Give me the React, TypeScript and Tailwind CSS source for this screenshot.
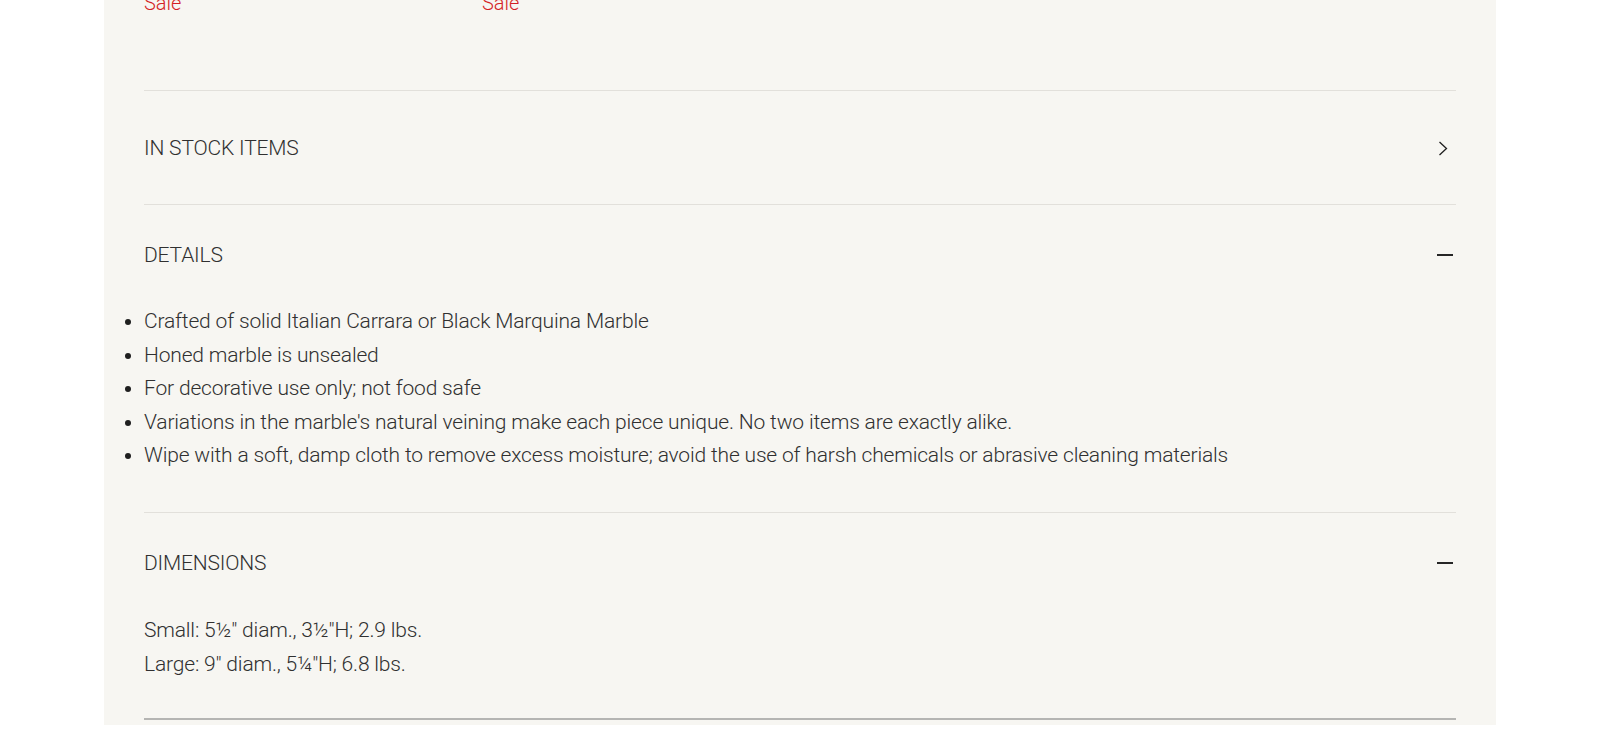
import React from 'react';

const details = [
  'Crafted of solid Italian Carrara or Black Marquina Marble',
  'Honed marble is unsealed',
  'For decorative use only; not food safe',
  "Variations in the marble's natural veining make each piece unique. No two items are exactly alike.",
  'Wipe with a soft, damp cloth to remove excess moisture; avoid the use of harsh chemicals or abrasive cleaning materials',
];

const dimensions = ['Small: 5½" diam., 3½"H; 2.9 lbs.', 'Large: 9" diam., 5¼"H; 6.8 lbs.'];

function Chevron() {
  return (
    <svg width="10" height="15" viewBox="0 0 10 15" fill="none" className="mr-[8px]">
      <polyline points="1.5,1 8.5,7.5 1.5,14" stroke="#1f1f1f" strokeWidth="1.3" />
    </svg>
  );
}

function Minus() {
  return <span className="block w-[16px] h-[1.5px] bg-[#262626] mr-[3px]" />;
}

function Section({ title, open, last, children }: { title: string; open?: boolean; last?: boolean; children?: React.ReactNode }) {
  return (
    <div className={`border-t border-[#e2e0db] pt-[33px] ${last ? 'pb-[37px]' : 'pb-[39px]'}`}>
      <button className="flex w-full items-center justify-between text-left">
        <span className="text-[21px] leading-[34px] font-light text-[#303030] tracking-[-0.17px]">{title}</span>
        {open ? <Minus /> : <Chevron />}
      </button>
      {open && <div className="mt-[33px]">{children}</div>}
    </div>
  );
}

export default function App() {
  return (
    <div className="h-[736px] overflow-hidden bg-white" style={{ fontFamily: 'Roboto, "Liberation Sans", sans-serif' }}>
      <div className="mx-[104px] h-full bg-[#f7f6f2] px-[40px]">
        {/* bottom of the product grid, scrolled mostly out of view */}
        <div className="grid grid-cols-4 gap-x-[40px] -mt-[11px] text-[20px] leading-[28px] font-light text-[#d41f26]">
          <div>Sale</div>
          <div>Sale</div>
        </div>

        <div className="mt-[73px]">
          <div className="border-t border-[#e2e0db] pt-[40px] pb-[39px]">
            <a href="#" className="flex items-center justify-between">
              <span className="text-[21px] leading-[34px] font-light text-[#303030] tracking-[-0.17px]">IN STOCK ITEMS</span>
              <Chevron />
            </a>
          </div>

          <Section title="DETAILS" open>
            <ul className="list-disc text-[21px] leading-[33.6px] font-light text-[#303030] tracking-[-0.17px]">
              {details.map((d) => (
                <li key={d} className="marker:text-[#1f1f1f]">{d}</li>
              ))}
            </ul>
          </Section>

          <Section title="DIMENSIONS" open last>
            <div className="text-[21px] leading-[34px] font-light text-[#303030] tracking-[-0.17px]">
              {dimensions.map((d) => (
                <p key={d}>{d}</p>
              ))}
            </div>
          </Section>

          <div className="border-t-2 border-[#b5b5b3]" />
        </div>
      </div>
    </div>
  );
}
